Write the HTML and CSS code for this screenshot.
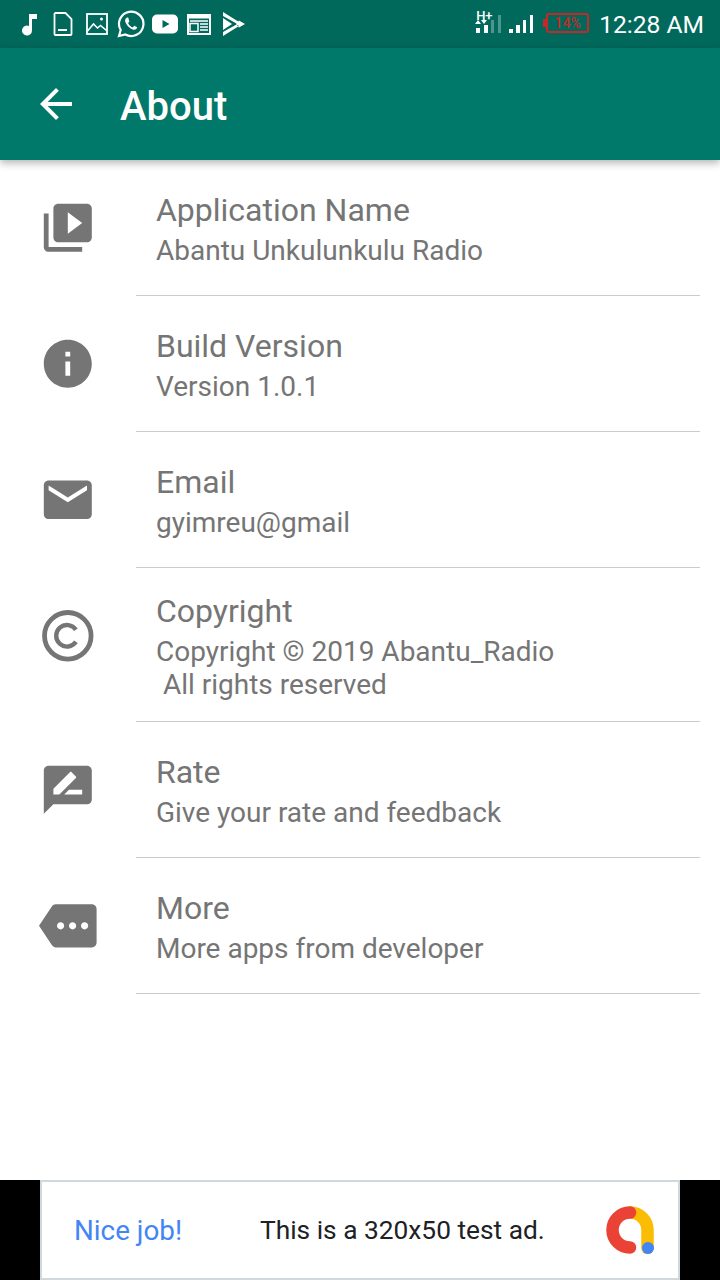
FILE: index.html
```html
<html>
    <head>
        <link rel="stylesheet" href="styles.css">
    </head>
    <body>
        <div class="page">
            <div class="statusbar">
                <div class="notif-icons">
                    <svg class="ic-music" width="16" height="24" viewBox="0 0 16 24"><path d="M7 2h8v5H10v11.5a5 5 0 1 1-3-4.5z" fill="#fff"/></svg>
                    <svg class="ic-doc" width="20" height="24" viewBox="0 0 20 24"><path d="M1.500 2a1 1 0 0 1 1-1h10l6 6v15a1 1 0 0 1-1 1h-15a1 1 0 0 1-1-1z" fill="none" stroke="#fff" stroke-width="1.8"/><path d="M5 18h9" stroke="#fff" stroke-width="2"/></svg>
                    <svg class="ic-img" width="22" height="22" viewBox="0 0 22 22"><rect x="1" y="1" width="20" height="20" fill="none" stroke="#fff" stroke-width="1.8"/><path d="M1.500 18l6-7 4 4 3-2.500 6 5" fill="none" stroke="#fff" stroke-width="1.600"/><circle cx="15.500" cy="6" r="1.500" fill="#fff"/></svg>
                    <svg class="ic-wa" width="28" height="28" viewBox="0 0 28 28"><path d="M2 26l1.700-6A12.200 12.200 0 1 1 8.300 24.500z" fill="none" stroke="#fff" stroke-width="2.200"/><path d="M10 7.500c-2 1-2.500 3-1.200 5.600 1.500 3 4 5.500 7 6.500 2.500.7 4-.5 4.400-2.300l-3-1.600-1.500 1.700c-2-.8-3.700-2.500-4.600-4.500l1.300-1.500L11.200 7.500z" fill="#fff"/></svg>
                    <svg class="ic-yt" width="26" height="20" viewBox="0 0 26 20"><rect width="26" height="19" y="0.500" rx="5" fill="#fff"/><path d="M10.500 6l7 4-7 4z" fill="#00695c"/></svg>
                    <svg class="ic-news" width="24" height="22" viewBox="0 0 24 22"><path d="M1 2h22v19H1z" fill="none" stroke="#fff" stroke-width="2"/><path d="M1 1.500h22v4H1z" fill="#fff"/><path d="M3 8h18M3 10.500h8v8H3zM13 11h8M13 14h8M13 17h8" stroke="#fff" stroke-width="1.500" fill="none"/></svg>
                    <svg class="ic-play" width="22" height="24" viewBox="0 0 22 24"><path d="M0 0l16 10-2.500 1.500L0 4zM0 24l16-10-2.500-1.500L0 20zM0 6l9 6-9 6zM16 8.500l6 3.500-6 3.500-3-3.500z" fill="#fff"/></svg>
                </div>
                <div class="sys-icons">
                    <div class="net">
                        <span class="net-label">H+</span>
                        <svg width="29" height="24" viewBox="0 0 29 24"><path d="M2 14l3-4 3 4zM8 10l3 4 3-4z" fill="#fff"/><path d="M3 18h4v5H3zM11 15h4v8h-4z" fill="#fff"/><path d="M18 10h3v13h-3zM25 5h3v18h-3z" fill="#fff" opacity=".3"/></svg>
                    </div>
                    <svg class="bars" width="26" height="19" viewBox="0 0 26 19"><path d="M1 14h4v4H1zM8 10h4v8H8zM15 5h3v13h-3zM22 0h3v18h-3z" fill="#fff"/></svg>
                    <div class="battery"><span>14%</span></div>
                </div>
                <span class="clock">12:28 AM</span>
            </div>

            <div class="appbar">
                <svg class="back" width="48" height="48" viewBox="0 0 24 24"><path d="M20 11H7.830l5.590-5.590L12 4l-8 8 8 8 1.410-1.410L7.830 13H20z" fill="#fff"/></svg>
                <b class="appbar-title">About</b>
            </div>

            <div class="content">
                <div class="row">
                    <svg class="row-icon" viewBox="0 0 24 24"><path d="M4 6H2v14c0 1.100.9 2 2 2h14v-2H4V6zm16-4H8c-1.100 0-2 .9-2 2v12c0 1.100.9 2 2 2h12c1.100 0 2-.9 2-2V4c0-1.100-.9-2-2-2zm-8 12.500v-9l6 4.500-6 4.500z"/></svg>
                    <div class="row-text">
                        <div class="row-title">Application Name</div>
                        <div class="row-sub">Abantu Unkulunkulu Radio</div>
                    </div>
                </div>
                <div class="row">
                    <svg class="row-icon" viewBox="0 0 24 24"><path d="M12 2C6.480 2 2 6.480 2 12s4.480 10 10 10 10-4.480 10-10S17.520 2 12 2zm1 15h-2v-6h2v6zm0-8h-2V7h2v2z"/></svg>
                    <div class="row-text">
                        <div class="row-title">Build Version</div>
                        <div class="row-sub">Version 1.0.1</div>
                    </div>
                </div>
                <div class="row">
                    <svg class="row-icon" viewBox="0 0 24 24"><path d="M20 4H4c-1.100 0-1.990.9-1.990 2L2 18c0 1.100.9 2 2 2h16c1.100 0 2-.9 2-2V6c0-1.100-.9-2-2-2zm0 4l-8 5-8-5V6l8 5 8-5v2z"/></svg>
                    <div class="row-text">
                        <div class="row-title">Email</div>
                        <div class="row-sub">gyimreu@gmail</div>
                    </div>
                </div>
                <div class="row">
                    <svg class="row-icon" viewBox="0 0 24 24"><circle cx="12" cy="12" r="9.700" fill="none" stroke="#757575" stroke-width="2"/><path d="M15.400 14.500A4.500 4.500 0 1 1 15.400 9.500" fill="none" stroke="#757575" stroke-width="1.800"/></svg>
                    <div class="row-text row-text-tall">
                        <div class="row-title">Copyright</div>
                        <div class="row-sub">Copyright © 2019 Abantu_Radio
 All rights reserved</div>
                    </div>
                </div>
                <div class="row">
                    <svg class="row-icon" viewBox="0 0 24 24"><path d="M20 2H4c-1.100 0-1.990.9-1.990 2L2 22l4-4h14c1.100 0 2-.9 2-2V4c0-1.100-.9-2-2-2zM6 14v-2.470l6.880-6.880c.2-.2.51-.2.71 0l1.770 1.770c.2.2.2.51 0 .71L8.470 14H6zm12 0h-7.500l2-2H18v2z"/></svg>
                    <div class="row-text">
                        <div class="row-title">Rate</div>
                        <div class="row-sub">Give your rate and feedback</div>
                    </div>
                </div>
                <div class="row">
                    <svg class="row-icon" viewBox="0 0 24 24"><path d="M22 3H7c-.69 0-1.230.35-1.590.88L0 12l5.410 8.110c.36.53.97.89 1.660.89H22c1.100 0 2-.9 2-2V5c0-1.100-.9-2-2-2zM9 13.500c-.83 0-1.500-.67-1.500-1.500s.67-1.500 1.500-1.500 1.500.67 1.500 1.500-.67 1.500-1.500 1.500zm5 0c-.83 0-1.500-.67-1.500-1.500s.67-1.500 1.500-1.500 1.500.67 1.500 1.500-.67 1.500-1.500 1.500zm5 0c-.83 0-1.500-.67-1.500-1.500s.67-1.500 1.500-1.500 1.500.67 1.500 1.500-.67 1.500-1.500 1.500z"/></svg>
                    <div class="row-text">
                        <div class="row-title">More</div>
                        <div class="row-sub">More apps from developer</div>
                    </div>
                </div>
            </div>

            <div class="adbar">
                <div class="ad">
                    <span class="ad-nice">Nice job!</span>
                    <span class="ad-msg">This is a 320x50 test ad.</span>
                    <svg class="ad-logo" width="48" height="48" viewBox="0 0 48 48">
                        <path d="M24 6.500A17.500 17.500 0 0 1 41.500 24V42" fill="none" stroke="#fbbc04" stroke-width="12.500" stroke-linecap="round"/>
                        <path d="M24 6.500A17.500 17.500 0 0 0 24 41.500" fill="none" stroke="#ea4335" stroke-width="12.500" stroke-linecap="round"/>
                        <circle cx="42" cy="42" r="6" fill="#4285f4"/>
                    </svg>
                </div>
            </div>
        </div>
    </body>
</html>
```

FILE: styles.css
```css
*{
    font-family: Roboto, sans-serif;
    box-sizing: border-box;
}
body{
    margin: 0px;
    background: white;
}
.page{
    width: 720px;
    height: 1280px;
    display: flex;
    flex-direction: column;
    overflow: hidden;
}
.statusbar{
    height: 48px;
    background: #00695c;
    display: flex;
    align-items: center;
    color: white;
    padding: 0px 16px 0px 22px;
}
.notif-icons{
    display: flex;
    align-items: center;
    flex-grow: 1;
}
.ic-doc{
    margin-left: 15px;
}
.ic-img{
    margin-left: 13px;
}
.ic-wa{
    margin-left: 9px;
}
.ic-yt{
    margin-left: 7px;
}
.ic-news{
    margin-left: 9px;
}
.ic-play{
    margin-left: 12px;
}
.sys-icons{
    display: flex;
    align-items: flex-start;
    height: 48px;
}
.net{
    position: relative;
    width: 29px;
    margin-top: 10px;
    margin-right: 6px;
}
.net svg{
    display: block;
}
.net-label{
    position: absolute;
    top: 0px;
    left: 3px;
    font-size: 13px;
    line-height: 11px;
    font-weight: 500;
}
.bars{
    margin-top: 15px;
    margin-right: 12px;
}
.battery{
    position: relative;
    width: 43px;
    height: 20px;
    margin-top: 13px;
    border: 2px solid #c62828;
    border-radius: 3px;
    color: #c62828;
    font-size: 14px;
    line-height: 16px;
    text-align: center;
    font-weight: 500;
}
.battery::before{
    content: "";
    position: absolute;
    left: -5px;
    top: 4px;
    width: 3px;
    height: 8px;
    background: #c62828;
}
.clock{
    font-size: 24.6px;
    margin-left: 10px;
}
.appbar{
    height: 112px;
    background: #00796b;
    display: flex;
    align-items: center;
    padding-left: 32px;
    box-shadow: 0px 3px 8px rgba(0, 0, 0, 0.3);
    position: relative;
    color: white;
}
.back{
    margin-right: 40px;
}
.appbar-title{
    font-size: 40px;
    font-weight: 500;
    padding-top: 4px;
}
.content{
    flex-grow: 1;
}
.row{
    display: flex;
    align-items: flex-start;
}
.row-icon{
    width: 57.6px;
    height: 57.6px;
    margin: 39px 39.2px 0px 39.2px;
    fill: #757575;
    flex-shrink: 0;
}
.row-text{
    width: 564px;
    min-height: 136px;
    display: flex;
    flex-direction: column;
    justify-content: center;
    padding: 23px 20px 21px;
    border-bottom: 1px solid #cccccc;
}
.row-text-tall{
    padding: 24px 20px 20px;
}
.row-title{
    font-size: 32px;
    line-height: 38px;
    color: #757575;
}
.row-sub{
    font-size: 28px;
    line-height: 33px;
    margin-top: 5px;
    color: #757575;
    white-space: pre-wrap;
}
.adbar{
    height: 100px;
    background: black;
    display: flex;
    justify-content: center;
}
.ad{
    width: 640px;
    height: 100px;
    background: white;
    border: 2px solid #cfd8dc;
    display: flex;
    align-items: center;
    padding: 0px 24px 0px 32px;
}
.ad-nice{
    font-size: 27.8px;
    color: #4285f4;
    width: 186px;
}
.ad-msg{
    font-size: 26.3px;
    color: #202124;
    flex-grow: 1;
}
```
